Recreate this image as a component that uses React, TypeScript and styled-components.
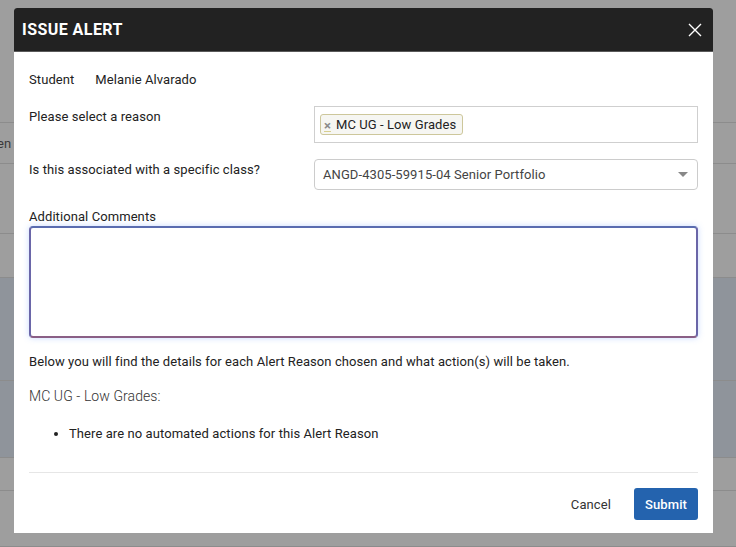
import React from "react";
import styled, {createGlobalStyle} from "styled-components";

const GlobalStyle = createGlobalStyle`
  html, body {
    margin: 0;
    padding: 0;
    width: 736px;
    height: 547px;
    overflow: hidden;
    background: #9e9e9e;
    font-family: Roboto, "Liberation Sans", sans-serif;
  }
`

const Page = styled.div`
  position: relative;
  width: 736px;
  height: 547px;
  background: #9e9e9e;
  display: flex;
  flex-direction: column;
`

const PageRow = styled.div<{h: number, tint?: boolean}>`
  height: ${p => p.h}px;
  box-sizing: border-box;
  border-bottom: 1px solid #8c8c8c;
  background: ${p => p.tint ? "#8f949b" : "transparent"};
  display: flex;
  align-items: center;
  font-size: 13px;
  color: #3a3a3a;
`

const Cutoff = styled.span`
  margin-left: -3px;
`

const Dialog = styled.div`
  position: absolute;
  left: 14px;
  top: 8px;
  width: 699px;
  height: 525px;
  background: #fff;
  border-radius: 3px 3px 0 0;
  display: flex;
  flex-direction: column;
  overflow: hidden;
`

const Header = styled.div`
  height: 44px;
  background: #222;
  border-bottom: 1px solid #5a5a5a;
  box-sizing: border-box;
  display: flex;
  align-items: center;
  justify-content: space-between;
  padding: 0 8px 0 8px;
`

const Title = styled.h2`
  margin: 0;
  color: #fff;
  font-size: 16px;
  font-weight: 700;
  letter-spacing: 0.45px;
`

const CloseButton = styled.button`
  background: none;
  border: none;
  padding: 0;
  width: 20px;
  height: 20px;
  display: flex;
  align-items: center;
  justify-content: center;
  cursor: pointer;
`

const Body = styled.div`
  padding: 20px 15px 0 15px;
  display: flex;
  flex-direction: column;
  flex: 1;
  letter-spacing: 0.08px;
`

const FieldRow = styled.div<{mt?: number}>`
  display: grid;
  grid-template-columns: 285px 1fr;
  align-items: start;
  margin-top: ${p => p.mt ?? 0}px;
`

const Label = styled.div<{mt?: number}>`
  font-size: 13px;
  color: #222;
  line-height: 16px;
  margin-top: ${p => p.mt ?? 0}px;
`

const StudentRow = styled.div`
  display: flex;
  gap: 21px;
  font-size: 13px;
  color: #222;
  line-height: 16px;
`

const MultiBox = styled.div`
  height: 37px;
  box-sizing: border-box;
  border: 1px solid #cfcfcf;
  padding: 7px 5px;
  display: flex;
  align-items: flex-start;
`

const Tag = styled.span`
  display: inline-flex;
  align-items: center;
  gap: 5px;
  height: 21px;
  box-sizing: border-box;
  padding: 0 6px 0 3px;
  background: #f6f6f2;
  border: 1px solid #cdc79b;
  border-radius: 3px;
  font-size: 13px;
  color: #222;
`

const TagX = styled.span`
  font-size: 13px;
  color: #8a8a8a;
  font-weight: 700;
  border-bottom: 1px solid #d8cf8e;
  line-height: 10px;
  margin-top: 4px;
`

const Select = styled.div`
  height: 31px;
  box-sizing: border-box;
  border: 1px solid #cccccc;
  border-radius: 4px;
  padding: 0 9px 0 8px;
  display: flex;
  align-items: center;
  justify-content: space-between;
  font-size: 13px;
  color: #444;
`

const Caret = styled.span`
  width: 0;
  height: 0;
  border-left: 5px solid transparent;
  border-right: 5px solid transparent;
  border-top: 5px solid #888;
`

const TextArea = styled.textarea`
  margin-top: 1px;
  height: 112px;
  flex-shrink: 0;
  box-sizing: border-box;
  border: 2px solid #6a66a8;
  border-top-color: #5a6cb0;
  border-bottom-color: #8a5f86;
  border-radius: 4px;
  box-shadow: 0 0 6px rgba(102, 153, 255, 0.35);
  resize: none;
  outline: none;
  font-family: inherit;
`

const Info = styled.p<{light?: boolean, mt: number}>`
  margin: ${p => p.mt}px 0 0 0;
  font-size: ${p => p.light ? 14 : 13}px;
  font-weight: ${p => p.light ? 300 : 400};
  color: ${p => p.light ? "#333" : "#222"};
  line-height: 16px;
`

const List = styled.ul`
  margin: 22px 0 0 0;
  padding-left: 40px;
  font-size: 13px;
  color: #222;
  line-height: 16px;
`

const Divider = styled.hr`
  margin: 30px 0 0 0;
  border: none;
  border-top: 1px solid #e6e6e6;
`

const Footer = styled.div`
  display: flex;
  justify-content: flex-end;
  align-items: center;
  gap: 12px;
  margin-top: 15px;
`

const Button = styled.button<{primary?: boolean}>`
  height: 32px;
  padding: 0 11px;
  border: none;
  border-radius: 3px;
  font-family: inherit;
  font-size: 13px;
  letter-spacing: 0.1px;
  font-weight: ${p => p.primary ? 500 : 400};
  background: ${p => p.primary ? "#2463ae" : "transparent"};
  color: ${p => p.primary ? "#fff" : "#333"};
  cursor: pointer;
`

export default function App() {
  return (
    <>
      <GlobalStyle/>
      <Page>
        <PageRow h={123}/>
        <PageRow h={41}><Cutoff>en</Cutoff></PageRow>
        <PageRow h={70}/>
        <PageRow h={44}/>
        <PageRow h={103} tint/>
        <PageRow h={77} tint/>
        <PageRow h={33}/>
        <PageRow h={56}/>
        <Dialog>
          <Header>
            <Title>ISSUE ALERT</Title>
            <CloseButton aria-label="Close">
              <svg width="14" height="14" viewBox="0 0 14 14">
                <path d="M1 1 L13 13 M13 1 L1 13" stroke="#fff" strokeWidth="1.4"/>
              </svg>
            </CloseButton>
          </Header>
          <Body>
            <StudentRow>
              <span>Student</span>
              <span>Melanie Alvarado</span>
            </StudentRow>
            <FieldRow mt={18}>
              <Label mt={3}>Please select a reason</Label>
              <MultiBox>
                <Tag><TagX>×</TagX>MC UG - Low Grades</Tag>
              </MultiBox>
            </FieldRow>
            <FieldRow mt={16}>
              <Label mt={3}>Is this associated with a specific class?</Label>
              <Select>
                <span>ANGD-4305-59915-04 Senior Portfolio</span>
                <Caret/>
              </Select>
            </FieldRow>
            <Label mt={19}>Additional Comments</Label>
            <TextArea/>
            <Info mt={16}>Below you will find the details for each Alert Reason chosen and what action(s) will be taken.</Info>
            <Info light mt={18}>MC UG - Low Grades:</Info>
            <List>
              <li>There are no automated actions for this Alert Reason</li>
            </List>
            <Divider/>
            <Footer>
              <Button>Cancel</Button>
              <Button primary>Submit</Button>
            </Footer>
          </Body>
        </Dialog>
      </Page>
    </>
  );
}
